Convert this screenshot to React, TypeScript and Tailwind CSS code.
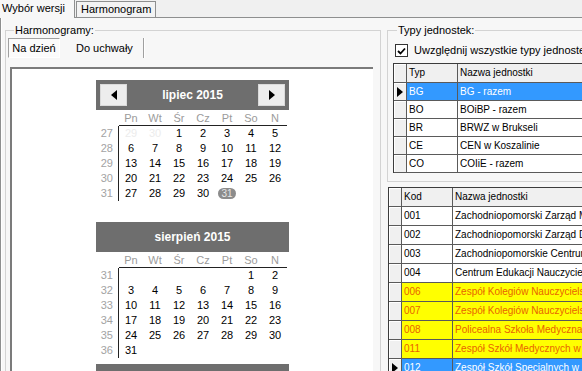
import React from "react";

type Day = { d: number; faint?: boolean; today?: boolean } | null;
type Week = { wk: number; days: Day[] };
type Row = { code: string; name: string; tone?: "sel" | "warn"; current?: boolean };

const range = (a: number, b: number): Day[] => Array.from({ length: b - a + 1 }, (_, i) => ({ d: a + i }));
const blank = (n: number): Day[] => Array(n).fill(null);

const july: Week[] = [
  { wk: 27, days: [{ d: 29, faint: true }, { d: 30, faint: true }, ...range(1, 5)] },
  { wk: 28, days: range(6, 12) },
  { wk: 29, days: range(13, 19) },
  { wk: 30, days: range(20, 26) },
  { wk: 31, days: [...range(27, 30), { d: 31, today: true }, ...blank(2)] },
];

const august: Week[] = [
  { wk: 31, days: [...blank(5), ...range(1, 2)] },
  { wk: 32, days: range(3, 9) },
  { wk: 33, days: range(10, 16) },
  { wk: 34, days: range(17, 23) },
  { wk: 35, days: range(24, 30) },
  { wk: 36, days: [...range(31, 31), ...blank(6)] },
];

const dow = ["Pn", "Wt", "Śr", "Cz", "Pt", "So", "N"];

const types: Row[] = [
  { code: "BG", name: "BG - razem", tone: "sel", current: true },
  { code: "BO", name: "BOiBP - razem" },
  { code: "BR", name: "BRWZ w Brukseli" },
  { code: "CE", name: "CEN w Koszalinie" },
  { code: "CO", name: "COIiE - razem" },
];

const units: Row[] = [
  { code: "001", name: "Zachodniopomorski Zarząd Melioracji i Urządzeń Wodnych" },
  { code: "002", name: "Zachodniopomorski Zarząd Dróg Wojewódzkich" },
  { code: "003", name: "Zachodniopomorskie Centrum Obsługi Inwestycji" },
  { code: "004", name: "Centrum Edukacji Nauczycieli w Koszalinie" },
  { code: "006", name: "Zespół Kolegiów Nauczycielskich w Szczecinie", tone: "warn" },
  { code: "007", name: "Zespół Kolegiów Nauczycielskich w Koszalinie", tone: "warn" },
  { code: "008", name: "Policealna Szkoła Medyczna w Szczecinie", tone: "warn" },
  { code: "011", name: "Zespół Szkół Medycznych w Koszalinie", tone: "warn" },
  { code: "012", name: "Zespół Szkół Specjalnych w Szczecinie", tone: "sel", current: true },
];

function NavButton({ dir }: { dir: "left" | "right" }) {
  return (
    <div className="w-[27px] h-[22px] bg-[#ededed] border border-[#dadada] flex items-center justify-center">
      <svg width="6" height="10" viewBox="0 0 6 10">
        <path d={dir === "left" ? "M6 0L0 5L6 10Z" : "M0 0L6 5L0 10Z"} fill="#000" />
      </svg>
    </div>
  );
}

function DayCell({ c }: { c: Day }) {
  if (!c) return <div className="h-[15px]" />;
  if (c.today)
    return (
      <div className="h-[15px] flex items-center justify-center">
        <span className="bg-[#8c8c8c] rounded-full px-[3px] text-[10px] leading-[11px] text-[#e6e6e6]">{c.d}</span>
      </div>
    );
  return <div className={`h-[15px] text-center ${c.faint ? "text-[#ececec]" : "text-black"}`}>{c.d}</div>;
}

function Month({ title, weeks, nav }: { title: string; weeks: Week[]; nav?: boolean }) {
  return (
    <div className="w-[193px] h-[142px] shrink-0">
      <div className={`h-[30px] bg-[#6e6e6e] flex items-center px-[4px] ${nav ? "justify-between" : "justify-center"}`}>
        {nav && <NavButton dir="left" />}
        <span className="text-white font-bold text-[12px]">{title}</span>
        {nav && <NavButton dir="right" />}
      </div>
      <div className="grid grid-cols-[23px_repeat(7,24px)] text-[11px] leading-[15px] pt-[1px]">
        <div />
        {dow.map((d) => (
          <div key={d} className="h-[15px] text-center text-[#9b9b9b] border-b border-[#222]">
            {d}
          </div>
        ))}
        {weeks.map((w) => (
          <React.Fragment key={w.wk}>
            <div className="h-[15px] text-right pr-[5px] text-[#a3a3a3] border-r border-[#222]">{w.wk}</div>
            {w.days.map((c, i) => (
              <DayCell key={i} c={c} />
            ))}
          </React.Fragment>
        ))}
      </div>
    </div>
  );
}

function Indicator({ current, h }: { current?: boolean; h: string }) {
  return (
    <div className={`${h} w-[13px] shrink-0 bg-[#f0f0f0] border-r border-b border-[#5a5a5a] shadow-[inset_1px_1px_0_#fff] flex items-center justify-center`}>
      {current && (
        <svg width="6" height="10" viewBox="0 0 6 10">
          <path d="M0 0L6 5L0 10Z" fill="#000" />
        </svg>
      )}
    </div>
  );
}

function DataGrid({ head, rows, rowH }: { head: string; rows: Row[]; rowH: string }) {
  return (
    <div className="w-[320px] shrink-0 border-l border-t border-[#3c3c3c] text-[10px] leading-none">
      <div className="flex h-[19px]">
        <Indicator h="h-[19px]" />
        <div className="w-[51px] shrink-0 px-[2px] flex items-center bg-[#f0f0f0] border-r border-b border-[#5a5a5a]">{head}</div>
        <div className="flex-1 px-[2px] flex items-center bg-[#f0f0f0] border-b border-[#5a5a5a]">Nazwa jednostki</div>
      </div>
      {rows.map((r) => {
        const tone =
          r.tone === "sel"
            ? "bg-[#3399ff] text-white"
            : r.tone === "warn"
              ? "bg-[#ffff00] text-[#e86400]"
              : "bg-white text-black";
        return (
          <div key={r.code} className={`flex ${rowH}`}>
            <Indicator h={rowH} current={r.current} />
            <div className={`w-[51px] shrink-0 px-[2px] flex items-center border-r border-b border-[#5a5a5a] ${tone}`}>{r.code}</div>
            <div className={`flex-1 px-[2px] flex items-center whitespace-nowrap overflow-hidden border-b border-[#5a5a5a] ${tone}`}>{r.name}</div>
          </div>
        );
      })}
    </div>
  );
}

export default function App() {
  return (
    <div className="w-[582px] h-[371px] overflow-hidden bg-[#f0f0f0] text-[11px] text-black flex flex-col font-['Liberation_Sans',Arial,sans-serif]">
      {/* main tabs */}
      <div className="h-[18px] shrink-0 flex items-end border-b border-[#8e8f8f]">
        <div className="h-[19px] -mb-px px-[2px] w-[75px] flex items-center bg-[#f7f7f7] border-r border-[#8e8f8f] relative z-10">
          Wybór wersji
        </div>
        <div className="h-[16px] ml-[1px] px-[4px] flex items-center bg-[#f3f3f3] border-t border-l border-r border-[#8e8f8f] whitespace-nowrap">
          Harmonogram
        </div>
      </div>

      {/* tab page */}
      <div className="flex-1 min-h-0 overflow-hidden flex bg-[#f7f7f7] border-l border-[#8e8f8f] shadow-[inset_1px_0_0_#fff]">
        <fieldset className="ml-[4px] mt-[6px] w-[376px] h-[400px] shrink-0 border border-[#d3d3d3] pl-[4px] pr-[7px] flex flex-col">
          <legend className="ml-[4px] px-[1px] leading-[13px]">Harmonogramy:</legend>
          <div className="flex h-[20px] -ml-[2px] mt-[1px]">
            <div className="w-[52px] flex items-center justify-center bg-[#fbfbfb] border border-t-[#a0a0a0] border-l-[#a0a0a0] border-r-white border-b-white">
              Na dzień
            </div>
            <div className="pl-[16px] pr-[10px] flex items-center">Do uchwały</div>
            <div className="w-[2px] border-l border-[#a0a0a0] border-r border-r-white" />
          </div>
          <div className="mt-[9px] flex-1 bg-white border-l-2 border-t-2 border-[#7b7b7b] flex flex-col items-center pt-[11px]">
            <Month title="lipiec 2015" weeks={july} nav />
            <Month title="sierpień 2015" weeks={august} />
            <div className="w-[193px] h-[30px] shrink-0 bg-[#6e6e6e]" />
          </div>
        </fieldset>

        <div className="flex flex-col">
          <fieldset className="ml-[6px] mt-[6px] w-[260px] shrink-0 border border-[#d3d3d3] pl-[5px] pb-[8px]">
            <legend className="ml-[4px] px-[1px] leading-[13px]">Typy jednostek:</legend>
            <div className="flex items-center h-[13px] mt-[7px] ml-[2px] gap-[6px] whitespace-nowrap">
              <div className="w-[13px] h-[13px] bg-white border border-[#333] flex items-center justify-center">
                <svg width="9" height="8" viewBox="0 0 9 8">
                  <path d="M1 4L3.5 6.5L8 1.5" stroke="#000" strokeWidth="1.8" fill="none" />
                </svg>
              </div>
              <span>Uwzględnij wszystkie typy jednostek</span>
            </div>
            <div className="mt-[6px]">
              <DataGrid head="Typ" rows={types} rowH="h-[18px]" />
            </div>
          </fieldset>
          <div className="ml-[7px] mt-[5px]">
            <DataGrid head="Kod" rows={units} rowH="h-[19px]" />
          </div>
        </div>
      </div>
    </div>
  );
}
